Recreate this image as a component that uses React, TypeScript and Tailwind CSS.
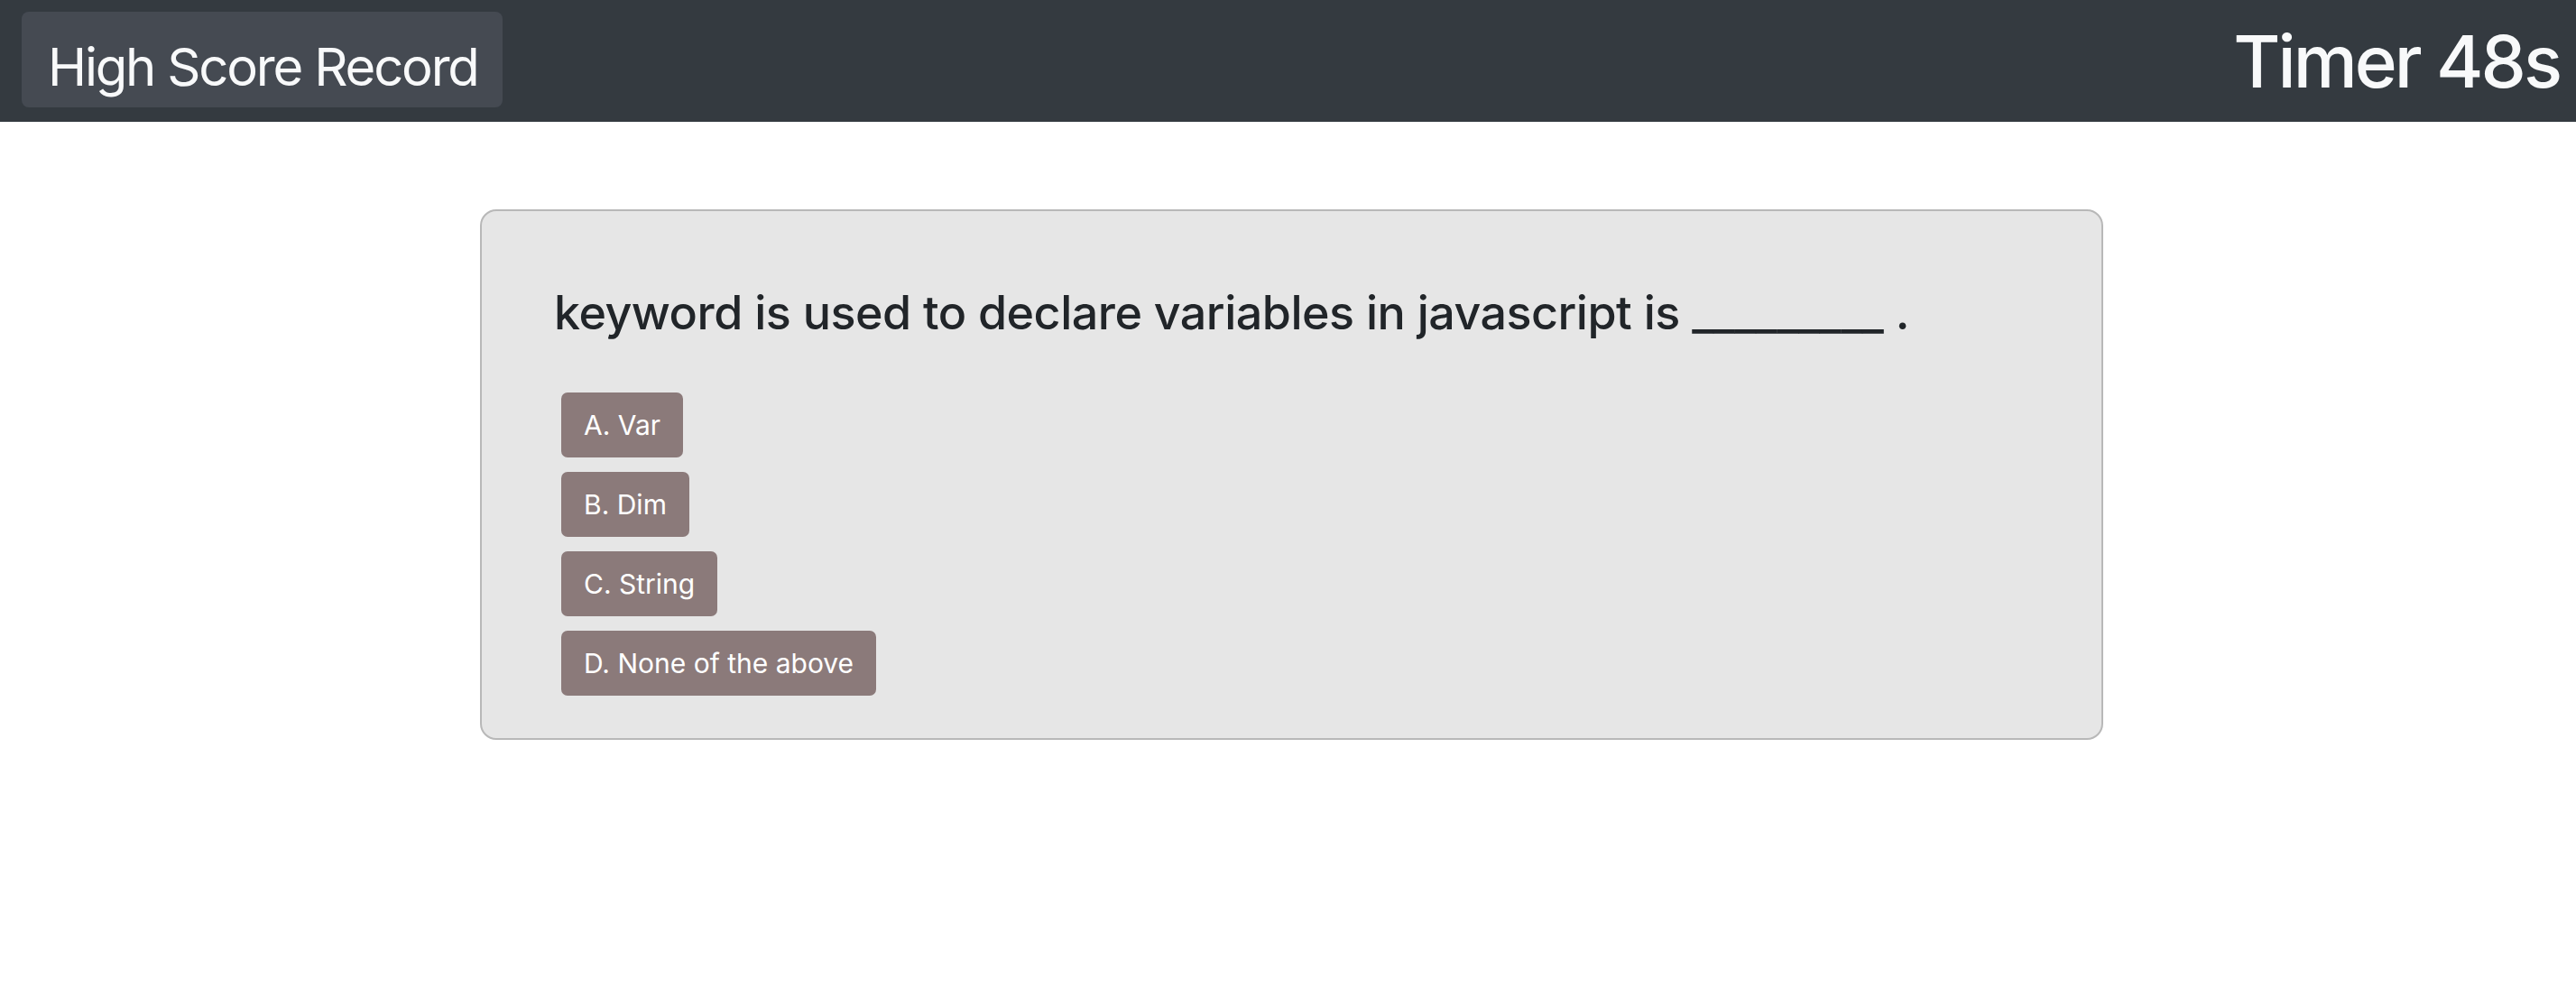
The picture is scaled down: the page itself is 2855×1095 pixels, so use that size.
import { useState } from "react";

const options = ["A. Var", "B. Dim", "C. String", "D. None of the above"];

export default function App() {
  const [seconds] = useState(48);

  return (
    <div className="min-h-screen bg-white font-['Inter',sans-serif]">
      {/* TOP BAR */}
      <header className="flex h-[135px] items-start justify-between bg-[#343a40]">
        <button className="ml-[24px] mt-[13px] h-[106px] rounded-[8px] bg-[#454a52] pl-[29px] pr-[27px] pt-[32px] pb-[16px] text-left text-[58px] leading-[58px] font-normal tracking-[-2.2px] text-[#f8f9fa]">
          High Score Record
        </button>
        <div className="mr-[18px] mt-[28px] text-[80px] leading-[80px] font-medium tracking-[-3px] text-[#f8f9fa]">
          Timer {seconds}s
        </div>
      </header>

      {/* QUESTION CARD */}
      <div className="pl-[8px]">
        <main className="mx-auto mt-[97px] w-[1799px] rounded-[18px] border-2 border-[#b8b8b8] bg-[#e6e6e6] pl-[80px] pt-[81px] pb-[47px]">
          <h2 className="text-[52px] leading-[64px] font-medium tracking-[-0.5px] text-[#212529]">
            keyword is used to declare variables in javascript is _________ .
          </h2>
          <div className="mt-[56px] ml-[8px] flex flex-col items-start gap-[16px]">
            {options.map((opt) => (
              <button
                key={opt}
                className="h-[72px] rounded-[7px] bg-[#8b7a7a] px-[25px] text-[30px] leading-[45px] font-normal text-white"
              >
                {opt}
              </button>
            ))}
          </div>
        </main>
      </div>
    </div>
  );
}
